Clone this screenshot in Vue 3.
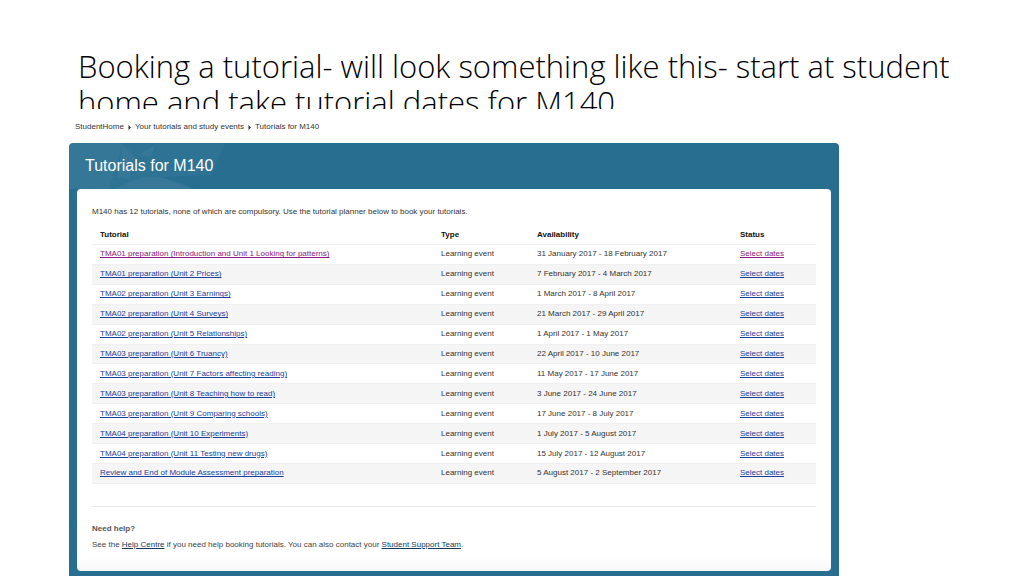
<script setup>
const tutorials = [
  ['TMA01 preparation (Introduction and Unit 1 Looking for patterns)', '31 January 2017 - 18 February 2017', true],
  ['TMA01 preparation (Unit 2 Prices)', '7 February 2017 - 4 March 2017'],
  ['TMA02 preparation (Unit 3 Earnings)', '1 March 2017 - 8 April 2017'],
  ['TMA02 preparation (Unit 4 Surveys)', '21 March 2017 - 29 April 2017'],
  ['TMA02 preparation (Unit 5 Relationships)', '1 April 2017 - 1 May 2017'],
  ['TMA03 preparation (Unit 6 Truancy)', '22 April 2017 - 10 June 2017'],
  ['TMA03 preparation (Unit 7 Factors affecting reading)', '11 May 2017 - 17 June 2017'],
  ['TMA03 preparation (Unit 8 Teaching how to read)', '3 June 2017 - 24 June 2017'],
  ['TMA03 preparation (Unit 9 Comparing schools)', '17 June 2017 - 8 July 2017'],
  ['TMA04 preparation (Unit 10 Experiments)', '1 July 2017 - 5 August 2017'],
  ['TMA04 preparation (Unit 11 Testing new drugs)', '15 July 2017 - 12 August 2017'],
  ['Review and End of Module Assessment preparation', '5 August 2017 - 2 September 2017'],
].map(([name, dates, visited]) => ({ name, dates, visited }))
</script>

<template>
  <main class="slide">
    <h1 class="slide-title">Booking a tutorial- will look something like this- start at student home and take tutorial dates for M140</h1>
    <section class="capture">
      <nav class="crumbs" aria-label="Breadcrumb">
        <a href="#">StudentHome</a>
        <svg class="arrow" viewBox="0 0 3 5" aria-hidden="true"><path d="M0.5 0 L3 2.5 L0.5 5 Z" /></svg>
        <a href="#">Your tutorials and study events</a>
        <svg class="arrow" viewBox="0 0 3 5" aria-hidden="true"><path d="M0.5 0 L3 2.5 L0.5 5 Z" /></svg>
        <span>Tutorials for M140</span>
      </nav>
      <div class="panel">
        <svg class="facets" viewBox="0 0 180 46" aria-hidden="true">
          <path d="M0 0 H156 L142 32 L92 34 L124 46 H0 Z" fill="#fff" opacity=".04" />
          <path d="M0 0 H54 L40 46 H0 Z" fill="#fff" opacity=".03" />
          <path d="M54 2 L66 14 L60 36 L48 34 Z M70 12 L86 2 L82 14 Z" fill="#fff" opacity=".04" />
          <path d="M46 46 Q84 22 124 46 Z" fill="#fff" opacity=".04" />
        </svg>
        <h2 class="panel-title">Tutorials for M140</h2>
        <div class="card">
          <p class="intro">M140 has 12 tutorials, none of which are compulsory. Use the tutorial planner below to book your tutorials.</p>
          <table class="grid">
            <thead>
              <tr>
                <th scope="col">Tutorial</th>
                <th class="c-type" scope="col">Type</th>
                <th class="c-dates" scope="col">Availability</th>
                <th class="c-status" scope="col">Status</th>
              </tr>
            </thead>
            <tbody>
              <tr v-for="t in tutorials" :key="t.name">
                <td><a href="#" :class="{ visited: t.visited }">{{ t.name }}</a></td>
                <td>Learning event</td>
                <td>{{ t.dates }}</td>
                <td><a href="#" :class="{ visited: t.visited }">Select dates</a></td>
              </tr>
            </tbody>
          </table>
          <footer class="help">
            <h3>Need help?</h3>
            <p>See the <a href="#">Help Centre</a> if you need help booking tutorials. You can also contact your <a href="#">Student Support Team</a>.</p>
          </footer>
        </div>
      </div>
    </section>
  </main>
</template>

<style>
body {
  background: #fff;
}
</style>

<style scoped>
.slide {
  display: flex;
  flex-direction: column;
  box-sizing: border-box;
  height: 100vh;
  padding: 48px 70px 0 69px;
  overflow: hidden;
  font-family: "Liberation Sans", Arial, sans-serif;
  font-size: 8px;
  line-height: 10px;
  color: #333;
}
.slide-title {
  flex: none;
  max-height: 61px;
  margin: 0 0 13px;
  padding-left: 9px;
  overflow: hidden;
  font-family: "Open Sans", "Noto Sans", sans-serif;
  font-size: 31px;
  font-weight: 300;
  line-height: 36px;
  color: #000;
}
.capture {
  display: flex;
  flex: 1;
  flex-direction: column;
  margin-right: 115px;
}
.crumbs {
  display: flex;
  align-items: center;
  gap: 4px;
  padding: 0 6px;
  margin-bottom: 11px;
}
.crumbs a {
  color: #333;
  text-decoration: none;
}
.arrow {
  width: 3px;
  height: 5px;
  fill: #333;
}
.panel {
  position: relative;
  flex: 1;
  padding: 0 8px 5px;
  border-radius: 4px 4px 0 0;
  background: #276e90;
}
.facets {
  position: absolute;
  top: 0;
  left: 0;
  width: 180px;
  height: 46px;
  border-radius: 4px 0 0;
}
.panel-title {
  position: relative;
  margin: 0;
  padding: 0 8px;
  font-size: 16px;
  font-weight: 400;
  line-height: 46px;
  color: #fff;
}
.card {
  position: relative;
  padding: 18px 15px 21px;
  border-radius: 4px;
  background: linear-gradient(#fff calc(100% - 16px), #f7f7f7);
}
.intro {
  margin: 0;
}
.grid {
  width: 100%;
  height: 258px;
  margin-top: 9px;
  border-collapse: collapse;
  table-layout: fixed;
}
th,
td {
  box-sizing: border-box;
  padding: 4px 8px;
  text-align: left;
  border-bottom: 1px solid #f0f0f0;
}
th {
  color: #111;
}
.c-type {
  width: 96px;
}
.c-dates {
  width: 203px;
}
.c-status {
  width: 84px;
}
tbody tr:nth-child(even) {
  background: #f5f5f5;
}
td a {
  color: #1a3f9c;
}
td a.visited {
  color: #8a1a82;
}
.help {
  margin-top: 22px;
  padding-top: 17px;
  border-top: 1px solid #e8e8e8;
}
.help h3 {
  margin: 0 0 6px;
  font-size: 8px;
  color: #555;
}
.help p {
  margin: 0;
  color: #444;
}
.help a {
  color: #173a55;
}
</style>
